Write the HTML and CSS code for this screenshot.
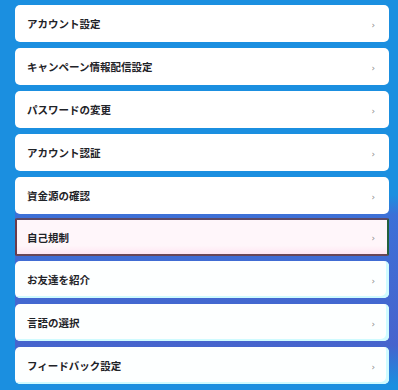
FILE: index.html
```html
<!DOCTYPE html>
<html lang="ja">
<head>
<meta charset="utf-8">
<link rel="stylesheet" href="styles.css">
</head>
<body>
<div class="page">
  <ul class="menu">
    <li class="item"><span class="label">アカウント設定</span><span class="chev">›</span></li>
    <li class="item"><span class="label">キャンペーン情報配信設定</span><span class="chev">›</span></li>
    <li class="item"><span class="label">パスワードの変更</span><span class="chev">›</span></li>
    <li class="item"><span class="label">アカウント認証</span><span class="chev">›</span></li>
    <li class="item"><span class="label">資金源の確認</span><span class="chev">›</span></li>
    <li class="item item-active"><span class="label">自己規制</span><span class="chev">›</span></li>
    <li class="item item-tint"><span class="label">お友達を紹介</span><span class="chev">›</span></li>
    <li class="item item-tint"><span class="label">言語の選択</span><span class="chev">›</span></li>
    <li class="item item-tint"><span class="label">フィードバック設定</span><span class="chev">›</span></li>
  </ul>
</div>
</body>
</html>
```
FILE: styles.css
```css
html, body {
  margin: 0;
  padding: 0;
  background: #1b8fe0;
  height: 390px;
  overflow: hidden;
  font-family: "Noto Sans CJK JP", "Noto Sans", sans-serif;
}
.page {
  margin-left: 15px;
  padding: 5px 9px 6px 0;
  background-image: linear-gradient(to bottom, rgba(62,110,214,0) 195px, #3d70d7 215px, #4664cd 345px, rgba(70,100,205,0) 385px);
}
.menu {
  list-style: none;
  margin: 0;
  padding: 0;
  display: flex;
  flex-direction: column;
  gap: 6px;
}
.item {
  box-sizing: border-box;
  height: 37px;
  background: #ffffff;
  border-radius: 5px;
  display: flex;
  align-items: center;
  justify-content: space-between;
  padding: 0 14px 0 12px;
}
.label {
  font-size: 10.5px;
  font-weight: 700;
  color: #1f2328;
}
.chev {
  font-family: "DejaVu Sans", sans-serif;
  font-size: 9px;
  color: #8a8a8a;
  padding-top: 2px;
}
.item-active {
  height: 38px;
  margin-top: -2px;
  margin-bottom: -1px;
  background: linear-gradient(to bottom, #fff6fa 0%, #fff6fa 75%, #ffe6f2 100%);
  border-top: 2px solid #5e4a66;
  border-bottom: 2px solid #6a4656;
  border-left: 2px solid #6a3c4c;
  border-right: 2px solid #23603c;
  border-radius: 2px;
  padding-left: 10px;
  padding-right: 12px;
}
.item-tint {
  background: #fdffff;
  box-shadow: inset -3px -2px 0 #cffbff;
}
```
